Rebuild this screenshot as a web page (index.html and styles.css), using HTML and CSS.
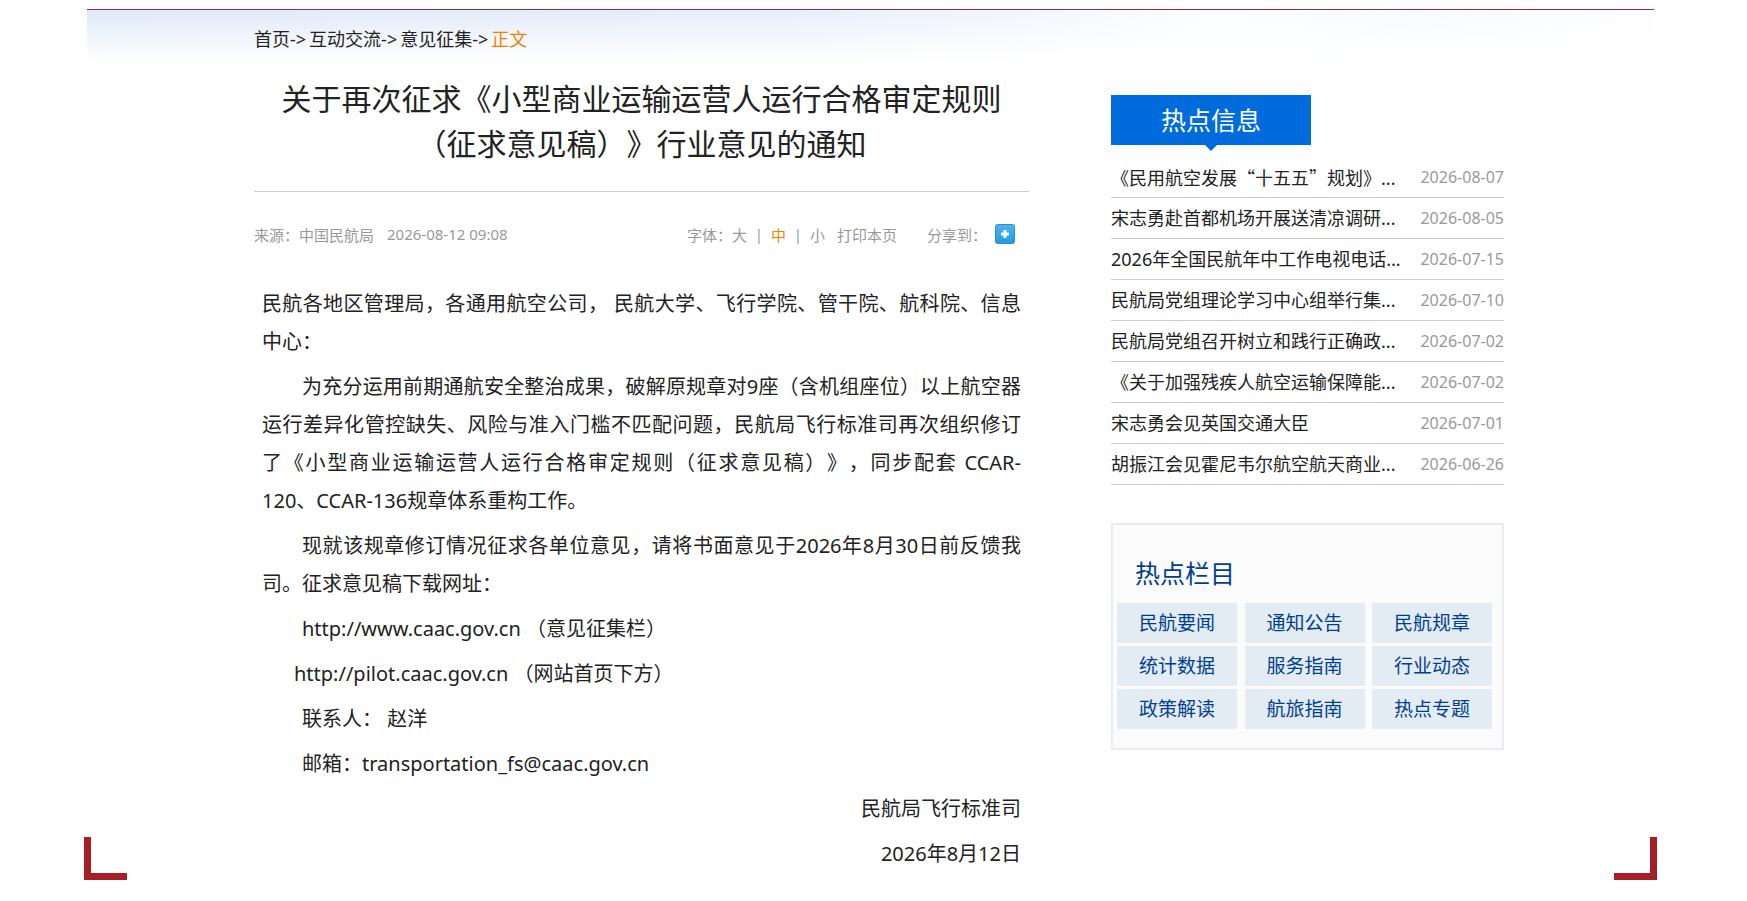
FILE: index.html
```html
<!DOCTYPE html>
<html lang="zh-CN">

<head>
    <meta charset="utf-8">
    <title>关于再次征求《小型商业运输运营人运行合格审定规则（征求意见稿）》行业意见的通知</title>
    <link rel="stylesheet" href="styles.css">
</head>

<body>
    <div class="wrap">
        <div class="banner"></div>
        <div class="content">
            <div class="left">
                <div class="crumb">
                    <a href="#">首页</a>-&gt;<a href="#">互动交流</a>-&gt;<a href="#">意见征集</a>-&gt;<a href="#" class="on">正文</a>
                </div>
                <h1>关于再次征求《小型商业运输运营人运行合格审定规则（征求意见稿）》行业意见的通知</h1>
                <div class="meta">
                    <span class="source">来源：中国民航局</span>
                    <span>2026-08-12 09:08</span>
                    <div class="tools">
                        <span>字体：</span>
                        <button type="button">大</button>
                        <i>|</i>
                        <button type="button" class="on">中</button>
                        <i>|</i>
                        <button type="button">小</button>
                        <button type="button" class="print">打印本页</button>
                        <span class="share">分享到：</span>
                        <button type="button" class="more" aria-label="分享">
                            <svg width="20" height="20" viewBox="0 0 20 20">
                                <defs>
                                    <linearGradient id="blue" x1="0" y1="0" x2="0" y2="1">
                                        <stop offset="0" stop-color="#4fb4ea" />
                                        <stop offset="1" stop-color="#1f9be6" />
                                    </linearGradient>
                                </defs>
                                <rect x="0.5" y="0.5" width="19" height="19" rx="2" fill="url(#blue)" stroke="#2b8fcb" />
                                <path d="M10 6v8M6 10h8" stroke="#fff" stroke-width="3" />
                            </svg>
                        </button>
                    </div>
                </div>
                <div class="article">
                    <p>民航各地区管理局，各通用航空公司， 民航大学、飞行学院、管干院、航科院、信息中心：</p>
                    <p class="indent">为充分运用前期通航安全整治成果，破解原规章对9座（含机组座位）以上航空器运行差异化管控缺失、风险与准入门槛不匹配问题，民航局飞行标准司再次组织修订了《小型商业运输运营人运行合格审定规则（征求意见稿）》，同步配套 CCAR-<span class="nowrap">120、CCAR-136</span>规章体系重构工作。</p>
                    <p class="indent">现就该规章修订情况征求各单位意见，请将书面意见于2026年8月30日前反馈我司。征求意见稿下载网址：</p>
                    <p class="indent">http://www.caac.gov.cn （意见征集栏）</p>
                    <p class="indent-small">http://pilot.caac.gov.cn （网站首页下方）</p>
                    <p class="indent">联系人： 赵洋</p>
                    <p class="indent">邮箱：transportation_fs@caac.gov.cn</p>
                    <p class="sign">民航局飞行标准司</p>
                    <p class="sign">2026年8月12日</p>
                </div>
            </div>
            <div class="right">
                <h2 class="hot-title">热点信息</h2>
                <ul class="hot-list">
                    <li><a href="#">《民用航空发展<q>十五五</q>规划》...</a><span>2026-08-07</span></li>
                    <li><a href="#">宋志勇赴首都机场开展送清凉调研...</a><span>2026-08-05</span></li>
                    <li><a href="#">2026年全国民航年中工作电视电话...</a><span>2026-07-15</span></li>
                    <li><a href="#">民航局党组理论学习中心组举行集...</a><span>2026-07-10</span></li>
                    <li><a href="#">民航局党组召开树立和践行正确政...</a><span>2026-07-02</span></li>
                    <li><a href="#">《关于加强残疾人航空运输保障能...</a><span>2026-07-02</span></li>
                    <li><a href="#">宋志勇会见英国交通大臣</a><span>2026-07-01</span></li>
                    <li><a href="#">胡振江会见霍尼韦尔航空航天商业...</a><span>2026-06-26</span></li>
                </ul>
                <div class="columns">
                    <h2>热点栏目</h2>
                    <div class="column-links">
                        <a href="#">民航要闻</a>
                        <a href="#">通知公告</a>
                        <a href="#">民航规章</a>
                        <a href="#">统计数据</a>
                        <a href="#">服务指南</a>
                        <a href="#">行业动态</a>
                        <a href="#">政策解读</a>
                        <a href="#">航旅指南</a>
                        <a href="#">热点专题</a>
                    </div>
                </div>
            </div>
        </div>
        <div class="corner corner-left"></div>
        <div class="corner corner-right"></div>
    </div>
</body>

</html>
```

FILE: styles.css
```css
* {
    box-sizing: border-box;
}

body {
    margin: 0;
    background: #fff;
    color: #222;
    font-family: "Noto Sans", "Noto Sans CJK SC", sans-serif;
    font-size: 18px;
    text-spacing-trim: space-all;
}

a {
    color: inherit;
    text-decoration: none;
}

h1,
h2,
p,
ul {
    margin: 0;
    padding: 0;
    font-weight: normal;
}

.wrap {
    position: relative;
    margin: 9px 93px 0 87px;
    border-top: 1px solid #962c42;
}

/* pale sky behind the breadcrumb */
.banner {
    height: 52px;
    margin-bottom: -52px;
    background: linear-gradient(to bottom, rgba(255, 255, 255, 0), #fff), linear-gradient(to right, #dfe9f8 0, #e7eefa 45%, #fcfeff 72%, #f7fbff 85%, #fefefe 100%);
}

.content {
    position: relative;
    display: flex;
    gap: 82px;
    padding: 0 150px 0 167px;
}

.left {
    flex: 1;
    min-width: 0;
}

.right {
    width: 393px;
    padding-top: 85px;
}

.crumb {
    padding: 14px 0 22px;
    line-height: 30px;
}

.crumb a + a {
    margin-left: 3px;
}

.on,
.crumb .on {
    color: #f08200;
}

h1 {
    padding-bottom: 25px;
    border-bottom: 1px solid #ccc;
    font-size: 30px;
    line-height: 45px;
    text-align: center;
}

.meta {
    display: flex;
    align-items: center;
    height: 40px;
    margin-top: 22px;
    color: #999;
    font-size: 15px;
}

.source {
    margin-right: 13px;
}

.tools {
    display: flex;
    align-items: center;
    margin-left: auto;
    margin-right: 14px;
}

.tools i {
    width: 24px;
    font-style: normal;
    text-align: center;
}

.tools button {
    padding: 0;
    border: 0;
    background: none;
    color: #999;
    font: inherit;
    cursor: pointer;
}

.tools button.on {
    color: #f08200;
}

.tools .print {
    margin-left: 12px;
}

.tools .share {
    margin-left: 30px;
}

.tools .more {
    display: block;
    width: 20px;
    height: 20px;
    margin-left: 8px;
}

.more svg {
    display: block;
}

.article {
    padding: 31px 8px 0;
    font-size: 20px;
    line-height: 38px;
}

.article p {
    margin-bottom: 7px;
    text-align: justify;
}

.article .indent {
    text-indent: 40px;
}

.article .indent-small {
    text-indent: 32px;
}

.article .sign {
    text-align: right;
}

.nowrap {
    white-space: nowrap;
}

.hot-title {
    position: relative;
    width: 200px;
    background: #006bdc;
    color: #fff;
    font-size: 25px;
    line-height: 50px;
    text-align: center;
}

.hot-title::after {
    content: "";
    position: absolute;
    top: 100%;
    left: 50%;
    margin-left: -6px;
    border: 6px solid transparent;
    border-top-color: #006bdc;
    border-bottom: 0;
}

.hot-list {
    padding-top: 12px;
    list-style: none;
}

.hot-list li {
    display: flex;
    justify-content: space-between;
    height: 41px;
    border-bottom: 1px solid #ccc;
    line-height: 40px;
    white-space: nowrap;
}

.hot-list span {
    color: #999;
    font-size: 16px;
}

.hot-list q {
    font-family: "Noto Sans CJK SC", sans-serif;
    quotes: "“" "”";
}

.columns {
    margin-top: 38px;
    padding: 28px 10px 19px 4px;
    border: 2px solid #e8ebf0;
    background: #fbfbfc;
    color: #003f8f;
}

.columns h2 {
    padding-left: 18px;
    font-size: 25px;
    line-height: 40px;
}

.column-links {
    display: grid;
    grid-template-columns: repeat(3, 120px);
    justify-content: space-between;
    row-gap: 3px;
    margin-top: 10px;
    font-size: 19px;
}

.column-links a {
    height: 40px;
    background: #e3ebf3;
    line-height: 40px;
    text-align: center;
}

/* red brackets at the foot of the page */
.corner {
    position: absolute;
    bottom: 0;
    width: 43px;
    height: 43px;
    border-bottom: 7px solid #a51f27;
}

.corner-left {
    left: -3px;
    border-left: 7px solid #a51f27;
}

.corner-right {
    right: -3px;
    border-right: 7px solid #a51f27;
}
```
